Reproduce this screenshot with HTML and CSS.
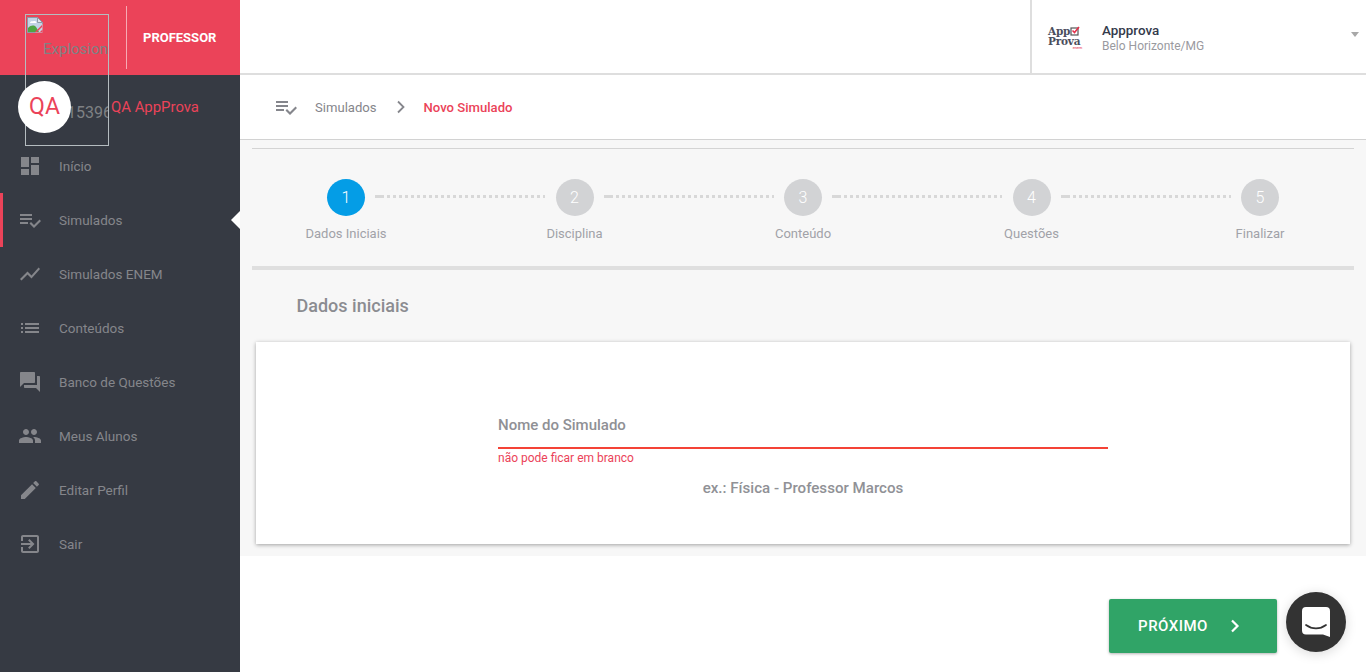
FILE: index.html
```html
<!DOCTYPE html>
<html lang="pt-BR">
<head>
<meta charset="utf-8">
<title>Novo Simulado</title>
<link rel="stylesheet" href="styles.css">
</head>
<body>
<div class="app">
  <aside class="sidebar">
    <div class="brand">
      <div class="brand-spacer"></div>
      <div class="brand-role">PROFESSOR</div>
    </div>
    <div class="userbar">
      <span class="user-name">QA AppProva</span>
    </div>
    <div class="broken-img">
      <svg class="broken-icon" viewBox="0 0 16 16" width="16" height="16"><path fill="#c3d3e6" d="M.5.5h10l5 5v10H.5z"/><path fill="#fff" d="M3 6c0-1.500 2-2 3-1.500C7 3.500 9.500 4 9.500 6z"/><path fill="#4fa642" d="M1 15v-4c3-3 6-3 8-1l3 5z"/><path fill="#eb4359" d="M8 15l7-7v2l-5 5z"/><path fill="#dfe3e8" d="M10.500 .5v5h5z"/><path fill="#eb4359" d="M13 15l2.500-2.500V15z"/><path fill="none" stroke="#8d9aa8" d="M15.500 7V5.500l-5-5h-10v15h8M10.500 .5v5h5"/></svg>
      <span class="broken-alt">Explosion</span>
      <span class="broken-id">115396</span>
    </div>
    <div class="avatar">QA</div>
    <nav class="nav">
      <a class="nav-item"><svg class="nav-icon" viewBox="0 0 24 24"><path d="M3 13h8V3H3v10zm0 8h8v-6H3v6zm10 0h8V11h-8v10zm0-18v6h8V3h-8z"/></svg>Início</a>
      <a class="nav-item is-active"><svg class="nav-icon" viewBox="0 0 24 24"><path d="M14 10H2v2h12v-2zm0-4H2v2h12V6zM2 16h8v-2H2v2zm19.5-4.5L23 13l-6.99 7-4.51-4.5L13 14l3.01 3 5.49-5.5z"/></svg>Simulados</a>
      <a class="nav-item"><svg class="nav-icon" viewBox="0 0 24 24"><path d="M3.5 18.49l6-6.01 4 4L22 6.92l-1.41-1.41-7.09 7.97-4-4L2 16.99z"/></svg>Simulados ENEM</a>
      <a class="nav-item"><svg class="nav-icon" viewBox="0 0 24 24"><path d="M3 13h2v-2H3v2zm0 4h2v-2H3v2zm0-8h2V7H3v2zm4 4h14v-2H7v2zm0 4h14v-2H7v2zM7 7v2h14V7H7z"/></svg>Conteúdos</a>
      <a class="nav-item"><svg class="nav-icon" viewBox="0 0 24 24"><path d="M21 6h-2v9H6v2c0 .55.45 1 1 1h11l4 4V7c0-.55-.45-1-1-1zm-4 6V3c0-.55-.45-1-1-1H3c-.55 0-1 .45-1 1v14l4-4h10c.55 0 1-.45 1-1z"/></svg>Banco de Questões</a>
      <a class="nav-item"><svg class="nav-icon" viewBox="0 0 24 24"><path d="M16 11c1.66 0 2.99-1.34 2.99-3S17.66 5 16 5c-1.66 0-3 1.34-3 3s1.34 3 3 3zm-8 0c1.66 0 2.99-1.34 2.99-3S9.66 5 8 5C6.34 5 5 6.34 5 8s1.34 3 3 3zm0 2c-2.33 0-7 1.17-7 3.5V19h14v-2.5c0-2.33-4.67-3.5-7-3.5zm8 0c-.29 0-.62.02-.97.05 1.16.84 1.97 1.97 1.97 3.45V19h6v-2.5c0-2.33-4.67-3.5-7-3.5z"/></svg>Meus Alunos</a>
      <a class="nav-item"><svg class="nav-icon" viewBox="0 0 24 24"><path d="M3 17.25V21h3.75L17.81 9.94l-3.75-3.75L3 17.25zM20.71 7.04c.39-.39.39-1.02 0-1.41l-2.34-2.34c-.39-.39-1.02-.39-1.41 0l-1.83 1.83 3.75 3.75 1.83-1.83z"/></svg>Editar Perfil</a>
      <a class="nav-item"><svg class="nav-icon" viewBox="0 0 24 24"><path d="M10.09 15.59L11.5 17l5-5-5-5-1.41 1.41L12.67 11H3v2h9.67l-2.58 2.59zM19 3H5c-1.11 0-2 .9-2 2v4h2V5h14v14H5v-4H3v4c0 1.1.89 2 2 2h14c1.1 0 2-.9 2-2V5c0-1.1-.9-2-2-2z"/></svg>Sair</a>
    </nav>
  </aside>

  <main class="main">
    <header class="topbar">
      <div class="school">
        <div class="school-logo">
          <div class="logo-line">App<svg class="logo-check" viewBox="0 0 10 10" width="10" height="10"><rect x="1" y="2" width="7" height="7" fill="none" stroke="#555" stroke-width="1.2"/><path d="M2.5 4.5l2 2L9 1" fill="none" stroke="#e5314b" stroke-width="1.6"/></svg></div>
          <div class="logo-line">Prova</div>
          <div class="logo-sub">enem</div>
        </div>
        <div class="school-text">
          <div class="school-name">Appprova</div>
          <div class="school-city">Belo Horizonte/MG</div>
        </div>
        <span class="school-caret"></span>
      </div>
    </header>

    <div class="breadcrumb">
      <svg class="crumb-icon" viewBox="0 0 24 24"><path d="M14 10H2v2h12v-2zm0-4H2v2h12V6zM2 16h8v-2H2v2zm19.5-4.5L23 13l-6.99 7-4.51-4.5L13 14l3.01 3 5.49-5.5z"/></svg>
      <span class="crumb-link">Simulados</span>
      <svg class="crumb-sep" viewBox="0 0 10 14" width="10" height="14"><path d="M2 1.5L7.5 7 2 12.5" fill="none" stroke="#85868c" stroke-width="1.8"/></svg>
      <span class="crumb-current">Novo Simulado</span>
    </div>

    <section class="content">
      <div class="stepper">
        <div class="step is-current"><span class="step-num">1</span><span class="step-label">Dados Iniciais</span></div>
        <div class="step"><span class="step-num">2</span><span class="step-label">Disciplina</span></div>
        <div class="step"><span class="step-num">3</span><span class="step-label">Conteúdo</span></div>
        <div class="step"><span class="step-num">4</span><span class="step-label">Questões</span></div>
        <div class="step is-last"><span class="step-num">5</span><span class="step-label">Finalizar</span></div>
      </div>
      <h1 class="section-title">Dados iniciais</h1>
      <div class="card">
        <div class="field">
          <div class="field-label">Nome do Simulado</div>
          <div class="field-error">não pode ficar em branco</div>
          <div class="field-hint">ex.: Física - Professor Marcos</div>
        </div>
      </div>
    </section>

    <footer class="actions">
      <button class="next-btn">PRÓXIMO<svg viewBox="0 0 10 14" width="10" height="14"><path d="M2 1.5L7.5 7 2 12.5" fill="none" stroke="#fff" stroke-width="2.2"/></svg></button>
    </footer>
  </main>
</div>
<div class="chat">
  <svg viewBox="0 0 28 30" width="28" height="30"><path fill="#fff" d="M4 0h20a4 4 0 0 1 4 4v26l-7-2.5H4a4 4 0 0 1-4-4V4a4 4 0 0 1 4-4z"/><path d="M4 18c6 4.500 14 4.500 20 0" fill="none" stroke="#333" stroke-width="1.700" stroke-linecap="round"/></svg>
</div>
</body>
</html>
```
FILE: styles.css
```css
* { box-sizing: border-box; }
html, body { margin: 0; height: 100%; overflow: hidden; }
body { font-family: Roboto, "Liberation Sans", sans-serif; background: #fff; color: #8b8c91; }
.app { display: flex; height: 672px; }

.sidebar { position: relative; width: 240px; flex: none; background: #363a43; }
.brand { display: flex; height: 75px; background: #eb4359; padding: 6px 0; }
.brand-spacer { width: 127px; border-right: 1px solid rgba(255,255,255,.55); }
.brand-role { flex: 1; padding-left: 16px; color: #fff; font-size: 13px; font-weight: 700; line-height: 64px; }
.userbar { display: flex; align-items: center; height: 64px; padding-left: 111px; }
.user-name { color: #eb4359; font-size: 14.900px; }
.broken-img { position: absolute; left: 25px; top: 14px; width: 84px; height: 132px; border: 1px solid #b5bcc0; overflow: hidden; color: #7f8184; }
.broken-icon { position: absolute; left: 1px; top: 2px; }
.broken-alt { position: absolute; left: 17px; top: 25px; font-size: 15px; line-height: 18px; }
.broken-id { position: absolute; left: 32px; top: 89px; font-size: 16px; line-height: 18px; white-space: nowrap; }
.avatar { position: absolute; left: 18px; top: 81px; width: 53px; height: 52px; border-radius: 50%; background: #fff; color: #eb4359; font-size: 23px; line-height: 52px; text-align: center; }

.nav-item { position: relative; display: flex; align-items: center; gap: 17px; height: 54px; padding: 0 0 1px 18px; font-size: 13.500px; color: #85868b; }
.nav-icon { width: 24px; height: 24px; fill: #85868b; flex: none; }
.nav-item.is-active::before { content: ""; position: absolute; left: 0; top: 0; width: 3px; height: 54px; background: #eb4359; }
.nav-item.is-active::after { content: ""; position: absolute; right: 0; top: 18px; border: 9px solid transparent; border-right-color: #fff; border-left-width: 0; }

.main { flex: 1; min-width: 0; display: flex; flex-direction: column; }
.topbar { display: flex; justify-content: flex-end; height: 75px; border-bottom: 2px solid #dedede; }
.school { position: relative; display: flex; align-items: center; width: 336px; border-left: 2px solid #dedede; padding: 3px 0 0 16px; }
.school-logo { width: 38px; margin-top: -1px; color: #4b4e5c; font-family: "DejaVu Serif", serif; font-weight: 700; font-size: 10.500px; line-height: 10px; letter-spacing: -.2px; }
.logo-line { display: flex; align-items: center; }
.logo-check { margin-left: 0; }
.logo-sub { color: #e5314b; font-family: Roboto, sans-serif; font-size: 4px; line-height: 4px; font-weight: 400; text-align: right; padding-right: 4px; }
.school-text { margin-left: 16px; }
.school-name { color: #343a4b; font-size: 13.400px; font-weight: 500; line-height: 16px; }
.school-city { color: #9a9a9f; font-size: 12px; line-height: 15px; }
.school-caret { position: absolute; right: 7px; top: 32px; border: 4px solid transparent; border-top: 5px solid #a8a8a8; border-bottom: 0; }

.breadcrumb { display: flex; align-items: center; height: 65px; border-bottom: 1px solid #d2d2d2; padding-left: 34px; font-size: 13.100px; }
.crumb-icon { width: 24px; height: 24px; fill: #85868c; flex: none; }
.crumb-link { margin-left: 17px; color: #85868b; }
.crumb-sep { margin: 0 18px 0 19px; flex: none; }
.crumb-current { color: #eb4359; font-weight: 500; }

.content { height: 416px; background: #f7f7f7; padding: 8px 12px 0; }
.stepper { display: flex; justify-content: space-between; height: 122px; padding: 30px 54px 0; border-top: 1px solid #d4d4d4; border-bottom: 4px solid #dfdfdf; }
.step { position: relative; display: flex; flex-direction: column; align-items: center; width: 80px; }
.step-num { width: 38px; height: 37px; border-radius: 50%; background: #d2d3d5; color: #fff; font-size: 16px; font-weight: 300; line-height: 37px; text-align: center; }
.step.is-current .step-num { background: #049de6; }
.step-label { margin-top: 10px; font-size: 13px; line-height: 15px; color: #a1a2a8; white-space: nowrap; }
.step::after { content: ""; position: absolute; left: 69px; top: 16px; width: 170px; height: 3px; background: linear-gradient(#d8d8d8, #d8d8d8) 0 0 / 6px 3px no-repeat, repeating-linear-gradient(90deg, #d8d8d8 0 3px, transparent 3px 6px); }
.step.is-last::after { display: none; }

.section-title { margin: 0; padding: 24px 0 0 44.500px; height: 72px; font-size: 18px; line-height: 24px; font-weight: 500; color: #8b8c91; }
.card { margin: 0 4px; height: 202px; background: #fff; box-shadow: 0 1px 4px rgba(0,0,0,.35); padding-top: 72px; }
.field { width: 610px; margin-left: 242px; }
.field-label { height: 35px; border-bottom: 2px solid #f44336; font-size: 15px; font-weight: 500; line-height: 22px; color: #8f9095; }
.field-error { margin-top: 2px; font-size: 12px; line-height: 15px; color: #eb4359; }
.field-hint { margin-top: 13px; font-size: 15.100px; font-weight: 500; line-height: 18px; color: #909196; text-align: center; }

.actions { flex: 1; display: flex; justify-content: flex-end; align-items: flex-start; padding: 43px 89px 0 0; }
.next-btn { display: flex; align-items: center; justify-content: center; gap: 22px; width: 168px; height: 54px; padding: 0 8px 0 0; border: 0; border-radius: 2px; background: #30a467; color: #fff; font-family: Roboto, sans-serif; font-size: 15px; font-weight: 500; letter-spacing: .5px; box-shadow: 0 1px 3px rgba(0,0,0,.3); }

.chat { position: fixed; left: 1286px; top: 592px; width: 60px; height: 60px; border-radius: 50%; background: #333; display: flex; align-items: center; justify-content: center; box-shadow: 0 2px 12px rgba(0,0,0,.15); }
```
